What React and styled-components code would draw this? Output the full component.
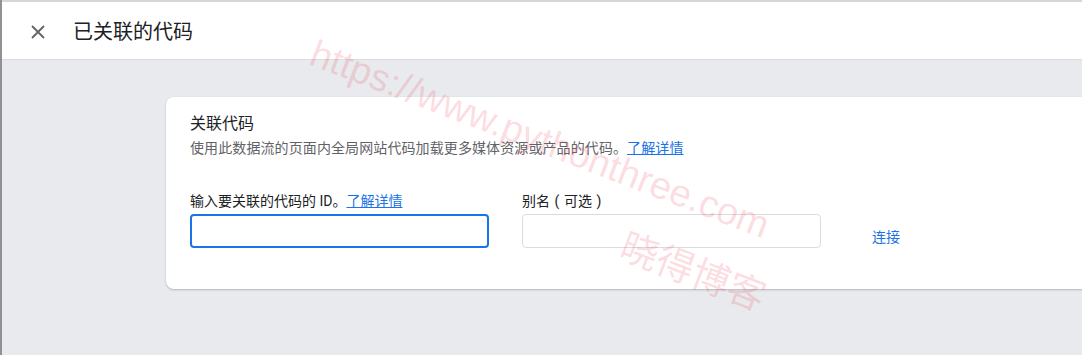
import React from "react";
import styled, { createGlobalStyle } from "styled-components";

const GlobalStyle = createGlobalStyle`
  html, body {
    margin: 0;
    padding: 0;
    height: 100%;
    overflow: hidden;
    background: #e8eaed;
  }
  body {
    font-family: Roboto, "Noto Sans CJK SC", "Liberation Sans", sans-serif;
    color: #202124;
  }
  * { box-sizing: border-box; }
`;

const Screen = styled.div`
  position: relative;
  display: flex;
  height: 100vh;
  width: 100vw;
  overflow: hidden;
`;

const LeftStrip = styled.div`
  width: 2px;
  flex-shrink: 0;
  background: #8f9193;
`;

const Main = styled.div`
  flex: 1;
  min-width: 0;
  display: flex;
  flex-direction: column;
  overflow: hidden;
`;

const TopLine = styled.div`
  height: 2px;
  background: #d6d6d6;
`;

const Header = styled.header`
  height: 58px;
  display: flex;
  align-items: center;
  padding: 2px 0 0 16px;
  background: #ffffff;
  border-bottom: 1px solid #dadce0;
`;

const CloseButton = styled.button`
  width: 40px;
  height: 40px;
  padding: 0;
  border: none;
  background: transparent;
  display: flex;
  align-items: center;
  justify-content: center;
  color: #5f6368;
  cursor: pointer;
`;

const Title = styled.h1`
  margin: 0 0 0 15px;
  font-size: 20px;
  font-weight: 400;
  line-height: 28px;
  color: #202124;
`;

const Body = styled.main`
  flex: 1;
  background: #e8eaed;
  padding: 37px 0 0 164px;
  display: flex;
  align-items: flex-start;
`;

const Card = styled.section`
  flex-shrink: 0;
  width: 1000px;
  background: #ffffff;
  border-radius: 8px;
  box-shadow: 0 1px 2px 0 rgba(60, 64, 67, 0.3);
  padding: 17px 24px 41px 24px;
`;

const CardTitle = styled.h2`
  margin: 0;
  font-size: 16px;
  font-weight: 400;
  line-height: 20px;
  color: #202124;
`;

const Description = styled.p`
  margin: 4px 0 0;
  font-size: 14px;
  line-height: 20px;
  color: #5f6368;
  letter-spacing: 0.1px;
`;

const Link = styled.a`
  color: #1a73e8;
  text-decoration: underline;
  cursor: pointer;
`;

const FieldRow = styled.div`
  margin-top: 33px;
  display: flex;
  align-items: flex-end;
  gap: 33px;
`;

const Field = styled.div`
  display: flex;
  flex-direction: column;
  width: 299px;
`;

const Label = styled.label`
  font-size: 14px;
  line-height: 20px;
  color: #202124;
  margin-bottom: 3px;
  white-space: nowrap;
`;

const Paren = styled.span`
  display: inline-block;
  width: 14px;
  text-align: center;
`;

const Input = styled.input`
  height: 34px;
  width: 100%;
  border-radius: 4px;
  outline: none;
  background: #ffffff;
  font-size: 14px;
  font-family: inherit;
  padding: 0 10px;
  border: ${(p) => (p.$focused ? "2px solid #1a73e8" : "1px solid #dadce0")};
`;

const TextButton = styled.button`
  margin-left: 10px;
  margin-bottom: 1px;
  padding: 0 8px;
  border: none;
  background: transparent;
  font-family: inherit;
  font-size: 14px;
  line-height: 20px;
  color: #1a73e8;
  cursor: pointer;
`;

const Watermark = styled.span`
  position: absolute;
  left: ${(p) => p.$x}px;
  top: ${(p) => p.$y}px;
  transform: translate(-50%, -50%) rotate(21deg);
  white-space: nowrap;
  pointer-events: none;
  font-family: "Liberation Sans", "Noto Sans CJK SC", sans-serif;
  font-size: ${(p) => p.$size}px;
  line-height: 1;
  color: rgba(240, 40, 70, 0.17);
`;

function CloseIcon() {
  return (
    <svg width="14" height="14" viewBox="0 0 14 14" fill="none">
      <path d="M1 1L13 13M13 1L1 13" stroke="currentColor" strokeWidth="1.8" />
    </svg>
  );
}

export default function App() {
  return (
    <>
      <GlobalStyle />
      <Screen>
        <LeftStrip />
        <Main>
          <TopLine />
          <Header>
            <CloseButton aria-label="关闭">
              <CloseIcon />
            </CloseButton>
            <Title>已关联的代码</Title>
          </Header>
          <Body>
            <Card>
              <CardTitle>关联代码</CardTitle>
              <Description>
                使用此数据流的页面内全局网站代码加载更多媒体资源或产品的代码。<Link>了解详情</Link>
              </Description>
              <FieldRow>
                <Field>
                  <Label>
                    输入要关联的代码的 ID。<Link>了解详情</Link>
                  </Label>
                  <Input $focused />
                </Field>
                <Field>
                  <Label>
                    别名<Paren>(</Paren>可选<Paren>)</Paren>
                  </Label>
                  <Input />
                </Field>
                <TextButton>连接</TextButton>
              </FieldRow>
            </Card>
          </Body>
        </Main>
        <Watermark $x={540} $y={139} $size={38}>
          https://www.pythonthree.com
        </Watermark>
        <Watermark $x={693} $y={272} $size={38}>
          晓得博客
        </Watermark>
      </Screen>
    </>
  );
}
